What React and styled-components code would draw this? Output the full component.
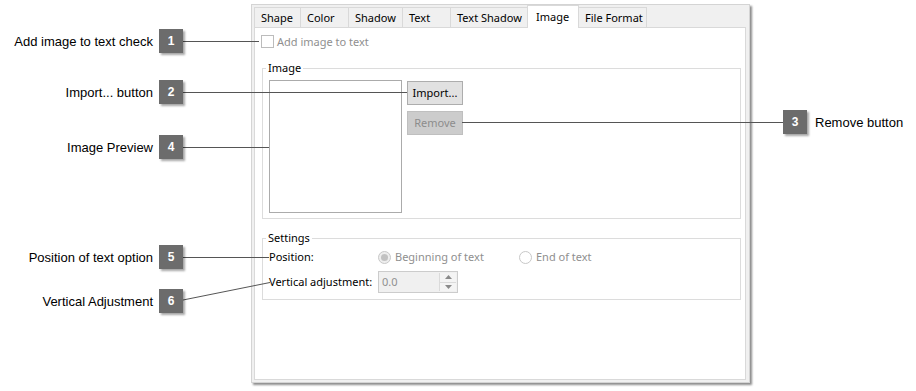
import React from "react";
import styled, { createGlobalStyle } from "styled-components";

const GlobalStyle = createGlobalStyle`
  html, body {
    margin: 0;
    padding: 0;
    background: #ffffff;
  }
  body {
    font-family: "Noto Sans", sans-serif;
  }
`;

const Stage = styled.div`
  position: relative;
  box-sizing: border-box;
  width: 916px;
  height: 391px;
  padding: 4px 0 0 251px;
  display: flex;
  align-items: flex-start;
  overflow: hidden;
  background: #ffffff;
`;

const Dialog = styled.div`
  box-sizing: border-box;
  width: 499px;
  height: 379px;
  padding: 0 3px 2px 2px;
  display: flex;
  flex-direction: column;
  background: #f0f0f0;
  border: 1px solid #d4d4d4;
  box-shadow: 2px 2px 2px rgba(0, 0, 0, 0.45);
  font-family: "Noto Sans", sans-serif;
  font-size: 11px;
  color: #000000;
`;

const TabRow = styled.div`
  display: flex;
  align-items: flex-start;
  height: 22px;
  flex: none;
`;

const Tab = styled.div`
  position: relative;
  box-sizing: border-box;
  width: ${(p) => p.$w}px;
  height: ${(p) => (p.$active ? 23 : 20)}px;
  margin-top: ${(p) => (p.$active ? 0 : 2)}px;
  padding-left: ${(p) => (p.$active ? 8 : 6)}px;
  display: flex;
  align-items: center;
  white-space: nowrap;
  background: ${(p) => (p.$active ? "#ffffff" : "#f0f0f0")};
  border: 1px solid #d9d9d9;
  border-bottom: none;
  margin-left: -1px;
  z-index: ${(p) => (p.$active ? 2 : 1)};
  line-height: 16px;

  &:first-child {
    margin-left: 0;
  }
`;

const Pane = styled.div`
  box-sizing: border-box;
  flex: 1;
  display: flex;
  flex-direction: column;
  padding: 7px 4px 0 7px;
  background: #ffffff;
  border: 1px solid #d9d9d9;
`;

const CheckRow = styled.label`
  display: flex;
  align-items: center;
  gap: 3px;
  height: 13px;
  margin-left: -1px;
  color: #8f8f8f;
  line-height: 16px;
`;

const CheckBox = styled.span`
  box-sizing: border-box;
  width: 13px;
  height: 13px;
  border: 1px solid #bcbcbc;
  background: #ffffff;
`;

const Group = styled.fieldset`
  margin: ${(p) => p.$top}px 0 0 0;
  padding: 0;
  min-width: 0;
  border: 1px solid #dcdcdc;
`;

const Legend = styled.legend`
  margin-left: 3px;
  padding: 0 2px;
  font-size: 11px;
  line-height: 16px;
  color: #000000;
`;

const ImageBody = styled.div`
  display: flex;
  align-items: flex-start;
  padding: 4px 6px 5px 6px;
`;

const Preview = styled.div`
  box-sizing: border-box;
  width: 133px;
  height: 133px;
  border: 1px solid #ababab;
  background: #ffffff;
`;

const ButtonColumn = styled.div`
  display: flex;
  flex-direction: column;
  gap: 6px;
  margin: 1px 0 0 5px;
`;

const Button = styled.div`
  box-sizing: border-box;
  width: 56px;
  height: 24px;
  display: flex;
  align-items: center;
  justify-content: center;
  background: ${(p) => (p.$disabled ? "#cccccc" : "#e1e1e1")};
  border: 1px solid ${(p) => (p.$disabled ? "#bfbfbf" : "#adadad")};
  color: ${(p) => (p.$disabled ? "#8c8c8c" : "#000000")};
  line-height: 16px;
`;

const SettingsBody = styled.div`
  display: grid;
  grid-template-columns: 109px auto;
  grid-template-rows: 16px 22px;
  row-gap: 6px;
  align-items: center;
  padding: 3px 6px 6px 6px;
  line-height: 16px;
`;

const RadioGroup = styled.div`
  display: flex;
  align-items: center;
`;

const RadioOption = styled.div`
  display: flex;
  align-items: center;
  gap: 4px;
  width: ${(p) => p.$w || "auto"};
  color: #8f8f8f;
`;

const RadioDot = styled.span`
  box-sizing: border-box;
  width: 13px;
  height: 13px;
  border-radius: 50%;
  border: 1px solid #c8c8c8;
  background: ${(p) => (p.$checked ? "#eeeeee" : "#ffffff")};
  display: flex;
  align-items: center;
  justify-content: center;

  &::after {
    content: "";
    display: ${(p) => (p.$checked ? "block" : "none")};
    width: 7px;
    height: 7px;
    border-radius: 50%;
    background: #c2c2c2;
  }
`;

const SpinBox = styled.div`
  box-sizing: border-box;
  width: 80px;
  height: 22px;
  display: flex;
  align-items: stretch;
  background: #f0f0f0;
  border: 1px solid #cccccc;
`;

const SpinValue = styled.span`
  flex: 1;
  padding-left: 3px;
  display: flex;
  align-items: center;
  color: #8f8f8f;
`;

const SpinButtons = styled.div`
  width: 16px;
  display: flex;
  flex-direction: column;
  margin: 1px 1px 1px 0;
  border-left: 1px solid #dadada;
`;

const SpinButton = styled.span`
  flex: 1;
  display: flex;
  align-items: center;
  justify-content: center;
  background: #f4f4f4;

  & + & {
    border-top: 1px solid #dadada;
  }
`;

const Overlay = styled.div`
  position: absolute;
  inset: 0;
  pointer-events: none;
`;

const Lines = styled.svg`
  position: absolute;
  left: 0;
  top: 0;
`;

const Callout = styled.div`
  position: absolute;
  display: flex;
  align-items: center;
  gap: ${(p) => (p.$side === "left" ? 6 : 8)}px;
  flex-direction: ${(p) => (p.$side === "left" ? "row" : "row-reverse")};
  font-family: "Liberation Sans", Arial, sans-serif;
  font-size: 13px;
  color: #000000;
  white-space: nowrap;
`;

const Badge = styled.span`
  width: 24px;
  height: 24px;
  display: flex;
  align-items: center;
  justify-content: center;
  background: #6c6c6c;
  color: #ffffff;
  font-weight: bold;
  font-size: 12px;
  box-shadow: 2px 2px 2px rgba(0, 0, 0, 0.35);
`;

const tabs = [
  { label: "Shape", w: 47 },
  { label: "Color", w: 49 },
  { label: "Shadow", w: 55 },
  { label: "Text", w: 49 },
  { label: "Text Shadow", w: 78 },
  { label: "Image", w: 52, active: true },
  { label: "File Format", w: 69 },
];

const callouts = [
  { n: 1, label: "Add image to text check", y: 41, side: "left", line: [183, 41.5, 259, 41.5] },
  { n: 2, label: "Import... button", y: 92, side: "left", line: [183, 92.5, 407, 92.5] },
  { n: 3, label: "Remove button", y: 122, side: "right", line: [462, 122.5, 783, 122.5] },
  { n: 4, label: "Image Preview", y: 147, side: "left", line: [183, 147.5, 269, 147.5] },
  { n: 5, label: "Position of text option", y: 257, side: "left", line: [183, 257.5, 269, 257.5] },
  { n: 6, label: "Vertical Adjustment", y: 301, side: "left", line: [183, 300, 270, 282.5] },
];

function Arrow({ up }) {
  return (
    <svg width="7" height="4" viewBox="0 0 7 4">
      <path d={up ? "M0 4 L3.5 0 L7 4 Z" : "M0 0 L3.5 4 L7 0 Z"} fill="#8a8a8a" />
    </svg>
  );
}

export default function App() {
  return (
    <>
      <GlobalStyle />
      <Stage>
        <Dialog>
          <TabRow>
            {tabs.map((t) => (
              <Tab key={t.label} $w={t.w} $active={t.active}>
                {t.label}
              </Tab>
            ))}
          </TabRow>
          <Pane>
            <CheckRow>
              <CheckBox />
              Add image to text
            </CheckRow>

            <Group $top={12}>
              <Legend>Image</Legend>
              <ImageBody>
                <Preview />
                <ButtonColumn>
                  <Button>Import...</Button>
                  <Button $disabled>Remove</Button>
                </ButtonColumn>
              </ImageBody>
            </Group>

            <Group $top={11}>
              <Legend>Settings</Legend>
              <SettingsBody>
                <span>Position:</span>
                <RadioGroup>
                  <RadioOption $w="141px">
                    <RadioDot $checked />
                    Beginning of text
                  </RadioOption>
                  <RadioOption>
                    <RadioDot />
                    End of text
                  </RadioOption>
                </RadioGroup>
                <span>Vertical adjustment:</span>
                <SpinBox>
                  <SpinValue>0.0</SpinValue>
                  <SpinButtons>
                    <SpinButton>
                      <Arrow up />
                    </SpinButton>
                    <SpinButton>
                      <Arrow />
                    </SpinButton>
                  </SpinButtons>
                </SpinBox>
              </SettingsBody>
            </Group>
          </Pane>
        </Dialog>

        <Overlay>
          <Lines width="916" height="391">
            {callouts.map((c) => (
              <line
                key={c.n}
                x1={c.line[0]}
                y1={c.line[1]}
                x2={c.line[2]}
                y2={c.line[3]}
                stroke="#555555"
                strokeWidth="1"
              />
            ))}
          </Lines>
          {callouts.map((c) => (
            <Callout
              key={c.n}
              $side={c.side}
              style={
                c.side === "left"
                  ? { right: 916 - 183, top: c.y - 12 }
                  : { left: 783, top: c.y - 12 }
              }
            >
              <span>{c.label}</span>
              <Badge>{c.n}</Badge>
            </Callout>
          ))}
        </Overlay>
      </Stage>
    </>
  );
}
